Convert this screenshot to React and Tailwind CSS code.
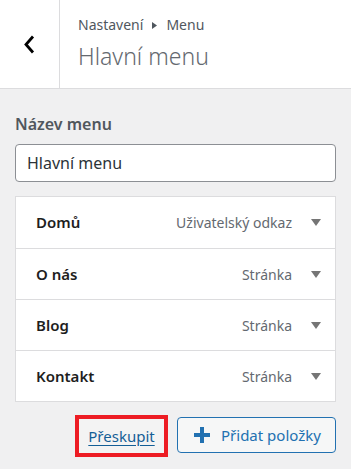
import React from "react";

const items = [
  { name: "Domů", type: "Uživatelský odkaz" },
  { name: "O nás", type: "Stránka" },
  { name: "Blog", type: "Stránka" },
  { name: "Kontakt", type: "Stránka" },
];

export default function App() {
  return (
    <div
      className="w-[351px] h-[469px] bg-[#f0f0f1] overflow-hidden"
      style={{ fontFamily: '"Noto Sans", "Open Sans", sans-serif' }}
    >
      <div className="flex h-[89px] bg-white border-b border-[#dcdcde]">
        <div className="w-[60px] border-r border-[#dcdcde] flex items-center justify-center">
          <svg width="13" height="19" viewBox="0 0 13 19" fill="none">
            <path d="M10 1.5 L3 9.5 L10 17.5" stroke="#000000" strokeWidth="2.8" />
          </svg>
        </div>
        <div className="pl-[18px] pt-[15px] flex flex-col">
          <div className="flex items-center text-[14px] leading-[20px] text-[#50575e]">
            <span>Nastavení</span>
            <svg className="mx-[9px]" width="5" height="7" viewBox="0 0 5 7">
              <path d="M0 0 L5 3.5 L0 7 Z" fill="#50575e" />
            </svg>
            <span>Menu</span>
          </div>
          <div className="mt-[7px] text-[23px] leading-[28px] font-light text-[#646970]">
            Hlavní menu
          </div>
        </div>
      </div>

      <div className="px-[15px]">
        <div className="pt-[24px] text-[16px] leading-[22px] font-semibold text-[#50575e]">
          Název menu
        </div>
        <div className="mt-[9px] h-[38px] bg-white border border-[#8c8f94] rounded-[4px] flex items-center px-[11px] text-[16px] text-[#2c3338]">
          Hlavní menu
        </div>

        <div className="mt-[14px] bg-white border border-[#dcdcde]">
          {items.map((it, i) => (
            <div
              key={it.name}
              className={`flex items-center h-[51px] pl-[20px] pr-[14px] ${
                i > 0 ? "border-t border-[#dcdcde]" : ""
              }`}
            >
              <span className="text-[15px] font-semibold text-[#1e1e1e]">{it.name}</span>
              <span className="ml-auto text-[14px] text-[#646970]">{it.type}</span>
              <svg className="ml-[19px]" width="10" height="7" viewBox="0 0 10 7">
                <path d="M0 0 L10 0 L5 7 Z" fill="#757575" />
              </svg>
            </div>
          ))}
        </div>

        <div className="mt-[13px] flex justify-end items-start gap-[9px]">
          <div className="border-[4px] border-[#ed1c24] h-[42px] w-[93px] flex items-center justify-center bg-[#f3f3f3]">
            <span className="text-[15px] text-[#135e96] underline underline-offset-[3px]">Přeskupit</span>
          </div>
          <div className="mt-[2px] h-[36px] w-[159px] border border-[#2271b1] rounded-[4px] bg-[#f6f7f7] flex items-center pl-[16px] text-[#2271b1]">
            <svg width="16" height="16" viewBox="0 0 16 16">
              <path d="M8 0 V16 M0 8 H16" stroke="#2271b1" strokeWidth="4" />
            </svg>
            <span className="ml-[11px] text-[15px]">Přidat položky</span>
          </div>
        </div>
      </div>
    </div>
  );
}
